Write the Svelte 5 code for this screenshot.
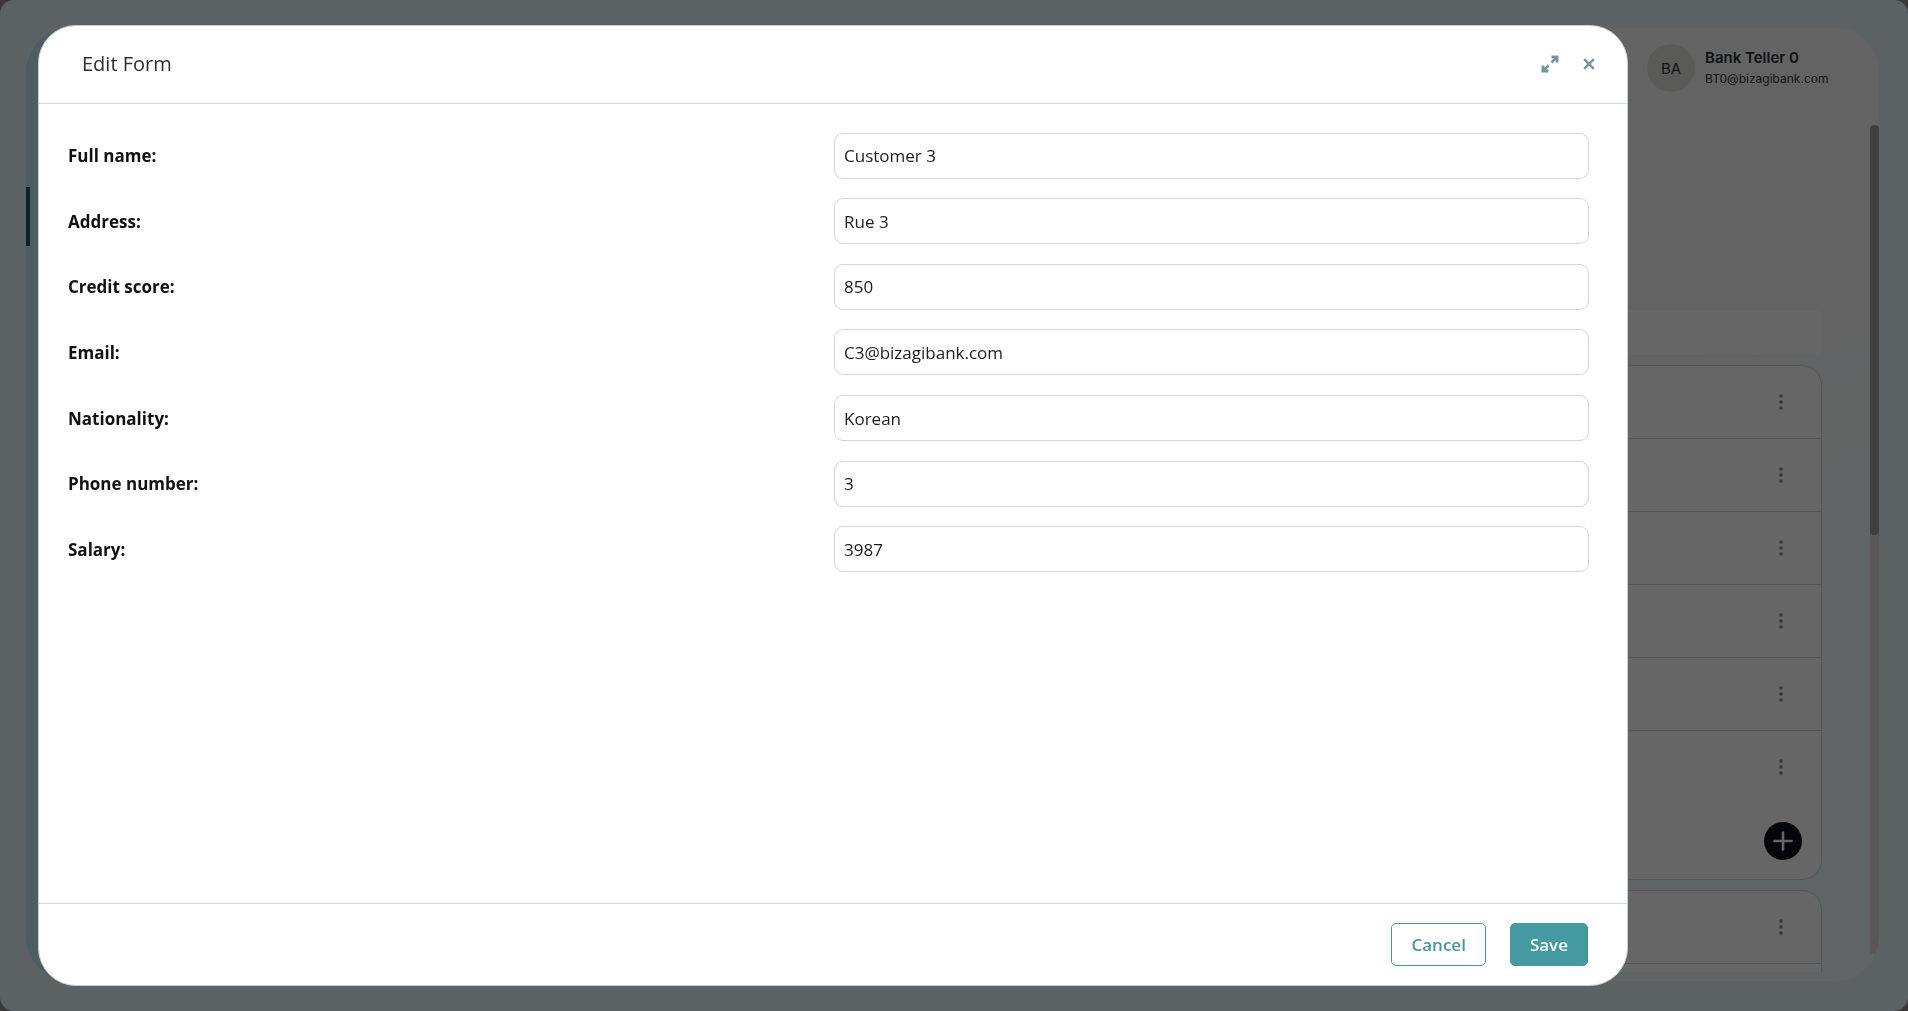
<script>
  let fields = $state([
    { id: 'full-name', label: 'Full name:', value: 'Customer 3' },
    { id: 'address', label: 'Address:', value: 'Rue 3' },
    { id: 'credit-score', label: 'Credit score:', value: '850' },
    { id: 'email', label: 'Email:', value: 'C3@bizagibank.com' },
    { id: 'nationality', label: 'Nationality:', value: 'Korean' },
    { id: 'phone', label: 'Phone number:', value: '3' },
    { id: 'salary', label: 'Salary:', value: '3987' },
  ]);
  const rows = [0, 1, 2, 3, 4, 5];
  const user = { initials: 'BA', name: 'Bank Teller 0', email: 'BT0@bizagibank.com' };
</script>

{#snippet dots()}
  <button class="more" aria-label="More options">
    <svg viewBox="0 0 4 16" width="4" height="16">
      <circle cx="2" cy="2" r="1.8" />
      <circle cx="2" cy="8" r="1.8" />
      <circle cx="2" cy="14" r="1.8" />
    </svg>
  </button>
{/snippet}

<div class="page">
  <div class="panel">
    <nav class="sidebar"><div class="sidebar-active"></div></nav>
    <main class="main">
      <header class="topbar">
        <div class="avatar">{user.initials}</div>
        <div class="user">
          <div class="user-name">{user.name}</div>
          <div class="user-email">{user.email}</div>
        </div>
      </header>
      <div class="scroll">
        <div class="list">
          <div class="filter"></div>
          <div class="card">
            {#each rows as row (row)}
              <div class="row">{@render dots()}</div>
            {/each}
            <div class="card-footer">
              <button class="add" aria-label="Add">
                <svg viewBox="0 0 20 20" width="20" height="20">
                  <path d="M10 1.5v17M1.5 10h17" />
                </svg>
              </button>
            </div>
          </div>
          <div class="card">
            <div class="row">{@render dots()}</div>
            <div class="row">{@render dots()}</div>
          </div>
        </div>
        <div class="scrollbar"><div class="scrollbar-thumb"></div></div>
      </div>
    </main>
  </div>
</div>

<div class="overlay">
  <div class="modal" role="dialog" aria-modal="true" aria-labelledby="modal-title">
    <header class="modal-header">
      <h2 id="modal-title">Edit Form</h2>
      <div class="modal-tools">
        <button class="tool" aria-label="Expand">
          <svg viewBox="0 0 18 18" width="18" height="18">
            <path class="line" d="M10.5 7.5l5-5M2.5 15.5l5-5" />
            <path class="fill" d="M10.5 .5h7V7.5h-2.9V3.4h-4.1zM.5 10.5h2.9v4.1h4.1v2.9H.5z" />
          </svg>
        </button>
        <button class="tool" aria-label="Close">
          <svg viewBox="0 0 12 12" width="12" height="12">
            <path class="line" d="M1.2 1.2l9.6 9.6M10.8 1.2l-9.6 9.6" />
          </svg>
        </button>
      </div>
    </header>
    <form class="fields" id="edit-form" onsubmit={(e) => e.preventDefault()}>
      {#each fields as field (field.id)}
        <div class="field">
          <label for={field.id}>{field.label}</label>
          <input id={field.id} type="text" bind:value={field.value} />
        </div>
      {/each}
    </form>
    <footer class="modal-footer">
      <button class="btn btn-cancel" type="button">Cancel</button>
      <button class="btn btn-save" type="submit" form="edit-form">Save</button>
    </footer>
  </div>
</div>

<style>
  :global(body) {
    margin: 0;
    background: #918c8c;
    font-family: 'Open Sans', 'Noto Sans', sans-serif;
  }
  .page,
  .page *,
  .overlay,
  .overlay * {
    box-sizing: border-box;
  }
  button {
    margin: 0;
    padding: 0;
    border: 0;
    background: none;
    font-family: inherit;
    cursor: pointer;
  }
  svg {
    display: block;
  }

  .page {
    height: 100vh;
    padding: 28px 29px 30px 26px;
    border-radius: 14px;
    background: #e6f5fa;
    overflow: hidden;
  }
  .panel {
    display: flex;
    height: 100%;
    border-radius: 44px;
    overflow: hidden;
  }
  .sidebar {
    width: 260px;
    padding-top: 159px;
    background: #c3e8f8;
  }
  .sidebar-active {
    width: 4px;
    height: 59px;
    background: #19576e;
  }
  .main {
    display: flex;
    flex: 1;
    flex-direction: column;
    background: linear-gradient(165deg, #f8f8fa 50%, #f0fafb 70%);
  }
  .topbar {
    display: flex;
    flex: none;
    justify-content: flex-end;
    gap: 10px;
    height: 97px;
    padding: 16px 44px 0 0;
    font-family: Inter, sans-serif;
    color: #2e3236;
  }
  .avatar {
    display: flex;
    align-items: center;
    justify-content: center;
    width: 48px;
    height: 48px;
    border-radius: 50%;
    background: #e0e0de;
    font-size: 15px;
  }
  .user {
    width: 130px;
    padding-top: 3px;
  }
  .user-name {
    font-size: 15px;
    font-weight: 600;
    line-height: 22px;
    white-space: nowrap;
  }
  .user-email {
    font-size: 12px;
    line-height: 20px;
  }
  .scroll {
    display: flex;
    flex: 1;
    min-height: 0;
    gap: 48px;
  }
  .list {
    flex: 1;
    margin-bottom: 9px;
    padding-top: 185px;
    overflow: hidden;
  }
  .filter {
    height: 45px;
    margin-bottom: 10px;
    border-radius: 8px;
    background: #fff;
  }
  .card {
    margin-bottom: 10px;
    border: 1px solid #d0d8da;
    border-radius: 20px;
    background: #fff;
  }
  .row {
    display: flex;
    align-items: center;
    justify-content: flex-end;
    height: 73px;
    padding-right: 38px;
    border-bottom: 1px solid #d2d2d2;
  }
  .row:nth-child(6) {
    border-bottom-color: transparent;
  }
  .more {
    fill: #8a8a8a;
  }
  .card-footer {
    display: flex;
    justify-content: flex-end;
    height: 75px;
    padding: 18px 19px 0 0;
  }
  .add {
    display: flex;
    align-items: center;
    justify-content: center;
    width: 38px;
    height: 38px;
    border-radius: 50%;
    background: #050f14;
    fill: none;
    stroke: #fff;
    stroke-width: 2.6;
    stroke-linecap: round;
  }
  .scrollbar {
    width: 9px;
    margin-bottom: 27px;
    border-radius: 4px;
    background: #e3dada;
  }
  .scrollbar-thumb {
    height: 410px;
    border-radius: 4px;
    background: #a09e9e;
  }

  .overlay {
    position: fixed;
    inset: 0;
    display: flex;
    padding: 25px 280px 25px 38px;
    background: rgba(0, 0, 0, 0.6);
  }
  .modal {
    display: flex;
    flex: 1;
    flex-direction: column;
    border: 1px solid #c8cdce;
    border-radius: 38px;
    background: #fff;
    overflow: hidden;
  }
  .modal-header {
    display: flex;
    flex: none;
    align-items: center;
    justify-content: space-between;
    height: 78px;
    padding: 0 32px 1px 43px;
    border-bottom: 1px solid #d1d8da;
  }
  h2 {
    margin: 0;
    color: #2e2e2e;
    font-size: 20px;
    font-weight: 500;
    line-height: 24px;
  }
  .modal-tools {
    display: flex;
    align-items: center;
    gap: 24px;
  }
  .tool .line {
    fill: none;
    stroke: #76969a;
    stroke-width: 2.5;
  }
  .tool .fill {
    fill: #76969a;
  }
  .fields {
    display: grid;
    flex: none;
    grid-auto-rows: 1fr;
    height: 459px;
    margin: 19px 0 auto;
  }
  .field {
    display: grid;
    grid-template-columns: 1fr 1fr;
    align-items: center;
  }
  .field label {
    padding-left: 29px;
    color: #111;
    font-size: 17px;
    font-weight: 700;
  }
  .field input {
    height: 46px;
    margin: 0 38px 0 1px;
    padding: 0 9px;
    border: 1px solid #d1d8da;
    border-radius: 9px;
    outline: 0;
    background: #fff;
    color: #1c1c1c;
    font-family: inherit;
    font-size: 17px;
  }
  .modal-footer {
    display: flex;
    flex: none;
    justify-content: flex-end;
    gap: 24px;
    height: 82px;
    padding: 19px 39px 0 0;
    border-top: 1px solid #d1d8da;
  }
  .btn {
    height: 43px;
    padding: 0 19px;
    border: 1px solid #459aa1;
    border-radius: 5px;
    font-size: 17px;
    font-weight: 600;
  }
  .btn-cancel {
    background: #fff;
    color: #459aa1;
  }
  .btn-save {
    background: #459aa1;
    color: #f4fbfb;
  }
</style>
